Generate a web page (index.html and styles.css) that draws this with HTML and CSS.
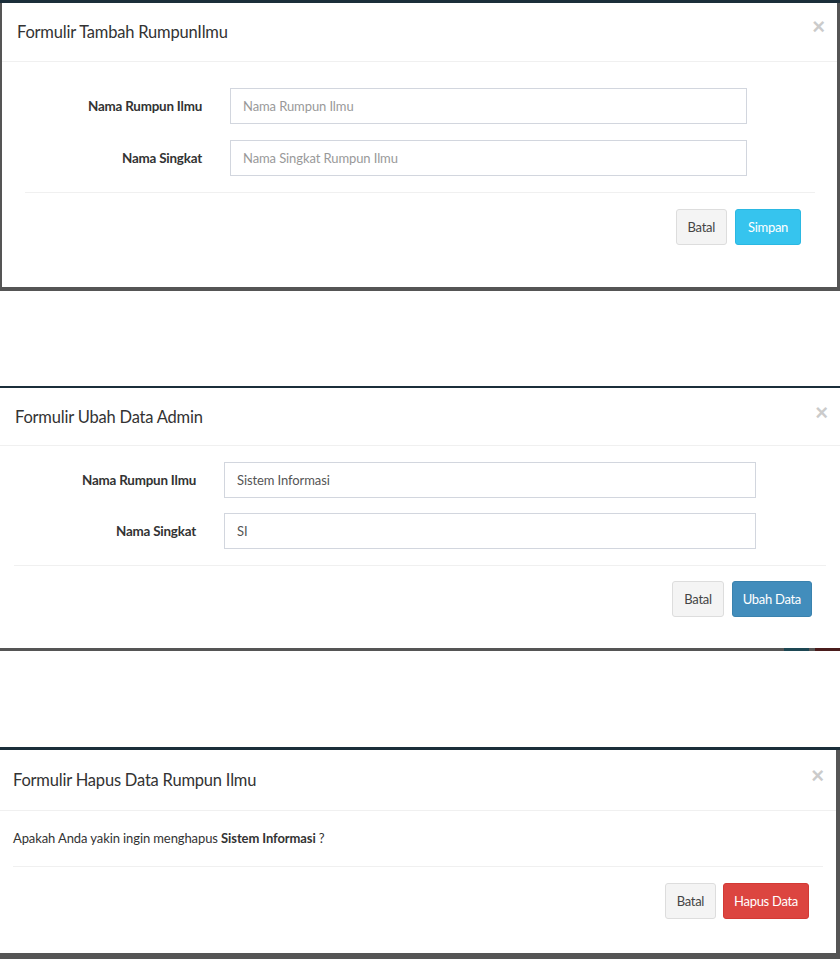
FILE: index.html
```html
<!DOCTYPE html>
<html lang="id">
<head>
    <meta charset="UTF-8" />
    <meta name="viewport" content="width=device-width, initial-scale=1.0"/>
    <title>Rumpun Ilmu - Modal</title>
    <link rel="stylesheet" href="styles.css">
</head>
<body>
    <!-- Tambah -->
    <div class="shot shot-add">
        <div class="modal">
            <div class="modal-header">
                <h4 class="modal-title">Formulir Tambah RumpunIlmu</h4>
                <button type="button" class="close">&times;</button>
            </div>
            <form class="form-horizontal">
                <div class="modal-body">
                    <div class="form-group">
                        <label class="control-label">Nama Rumpun Ilmu</label>
                        <input type="text" class="form-control" placeholder="Nama Rumpun Ilmu">
                    </div>
                    <div class="form-group">
                        <label class="control-label">Nama Singkat</label>
                        <input type="text" class="form-control" placeholder="Nama Singkat Rumpun Ilmu">
                    </div>
                </div>
                <div class="modal-footer">
                    <button type="button" class="btn btn-default">Batal</button>
                    <button type="button" class="btn btn-info">Simpan</button>
                </div>
            </form>
        </div>
    </div>

    <!-- Ubah -->
    <div class="shot shot-edit">
        <div class="modal">
            <div class="modal-header">
                <h4 class="modal-title">Formulir Ubah Data Admin</h4>
                <button type="button" class="close">&times;</button>
            </div>
            <form class="form-horizontal">
                <div class="modal-body">
                    <div class="form-group">
                        <label class="control-label">Nama Rumpun Ilmu</label>
                        <input type="text" class="form-control" value="Sistem Informasi">
                    </div>
                    <div class="form-group">
                        <label class="control-label">Nama Singkat</label>
                        <input type="text" class="form-control" value="SI">
                    </div>
                </div>
                <div class="modal-footer">
                    <button type="button" class="btn btn-default">Batal</button>
                    <button type="button" class="btn btn-primary">Ubah Data</button>
                </div>
            </form>
        </div>
    </div>

    <!-- Hapus -->
    <div class="shot shot-delete">
        <div class="modal">
            <div class="modal-header">
                <h4 class="modal-title">Formulir Hapus Data Rumpun Ilmu</h4>
                <button type="button" class="close">&times;</button>
            </div>
            <div class="modal-body">
                <p>Apakah Anda yakin ingin menghapus <b>Sistem Informasi</b> ?</p>
            </div>
            <div class="modal-footer">
                <button type="button" class="btn btn-default">Batal</button>
                <button type="button" class="btn btn-danger">Hapus Data</button>
            </div>
        </div>
    </div>
</body>
</html>
```

FILE: styles.css
```css
body {
    margin: 0;
    background: #fff;
    font-family: 'Lato', 'Liberation Sans', sans-serif;
    font-size: 13px;
    color: #333;
}

/* each screenshot: dimmed page around the modal */
.shot {
    background: #555;
    border-top: 3px solid #1b2e3a; /* dark header behind backdrop */
}

.modal {
    background: #fff;
}

.shot-add {
    padding: 0 3px 4px 2px;
    margin-bottom: 95px;
}

.shot-edit {
    padding: 0 0 3px 0;
    margin-bottom: 96px;
    border-top-width: 2px;
    /* bits of the page showing under the backdrop */
    background: linear-gradient(to right, #555 784px, #1d4753 784px 809px, #555 809px 815px, #4a1c1c 815px);
}

.shot-delete {
    padding: 0 4px 6px 0;
}

.modal-header {
    display: flex;
    justify-content: space-between;
    align-items: center;
    padding: 0 15px 0 15px;
    height: 58px;
    border-bottom: 1px solid #f0f0f0;
}

.shot-edit .modal-header {
    height: 57px;
    padding: 0 15px 0 15px;
}

.shot-delete .modal-header {
    padding: 0 13px;
    height: 60px;
}

.modal-title {
    margin: 0;
    font-size: 16.5px;
    font-weight: 400;
    color: #333;
    letter-spacing: -0.2px;
}

.close {
    border: none;
    background: none;
    padding: 0;
    font-family: 'Liberation Sans', sans-serif;
    font-size: 22px;
    font-weight: bold;
    line-height: 1;
    color: #000;
    opacity: 0.2;
    margin-top: -10px;
    margin-right: -3px;
}

.shot-edit .close {
    margin-top: -8px;
    margin-right: -3px;
}

.shot-delete .close {
    margin-top: -8px;
    margin-right: -1px;
}

.modal-body {
    padding: 26px 15px 0;
}

.form-group {
    display: flex;
    align-items: center;
    margin-bottom: 16px;
}

.control-label {
    width: 185px;
    padding-right: 28px;
    text-align: right;
    font-weight: 700;
    font-size: 13.4px;
    letter-spacing: -0.2px;
}

.shot-edit .control-label {
    width: 181px;
}

.form-control {
    box-sizing: border-box;
    width: 517px;
    height: 36px;
    margin: 0;
    padding: 6px 12px;
    border: 1px solid #d2d6de;
    border-radius: 0;
    font-family: inherit;
    font-size: 13px;
    color: #555;
    letter-spacing: -0.1px;
}

.shot-edit .form-control {
    width: 532px;
}

.form-control::placeholder {
    color: #999;
}

.shot-edit .modal-body {
    padding-top: 16px;
}

.shot-edit .form-group {
    margin-bottom: 15px;
}

.shot-edit .form-group:last-child {
    margin-bottom: 16px;
}

.shot-delete .modal-body {
    padding: 17px 13px 0;
}

.shot-delete .modal-body p {
    margin: 0 0 18px;
    line-height: 20px;
    letter-spacing: -0.1px;
}

.modal-footer {
    display: flex;
    justify-content: flex-end;
    gap: 8px;
    margin: 0 22px 0 23px;
    padding: 16px 14px 42px 0;
    border-top: 1px solid #f0f0f0;
}

.shot-edit .modal-footer {
    margin: 0 14px;
    padding: 15px 14px 31px 0;
}

.shot-delete .modal-footer {
    margin: 0 13px;
    padding: 16px 14px 34px 0;
    gap: 7px;
}

.btn {
    height: 36px;
    padding: 0 12px;
    border: 1px solid transparent;
    border-radius: 3px;
    font-family: inherit;
    font-size: 13px;
    letter-spacing: -0.3px;
    cursor: pointer;
}

.btn-default {
    padding: 0 11px;
    background: #f4f4f4;
    border-color: #ddd;
    color: #444;
}

.btn-info {
    background: #36c4ee;
    border-color: #2bb8e2;
    color: #fff;
}

.btn-primary {
    padding: 0 10px;
    background: #428dbc;
    border-color: #3a82ae;
    color: #fff;
}

.btn-danger {
    padding: 0 10px;
    background: #dc4540;
    border-color: #d33a35;
    color: #fff;
}
```
